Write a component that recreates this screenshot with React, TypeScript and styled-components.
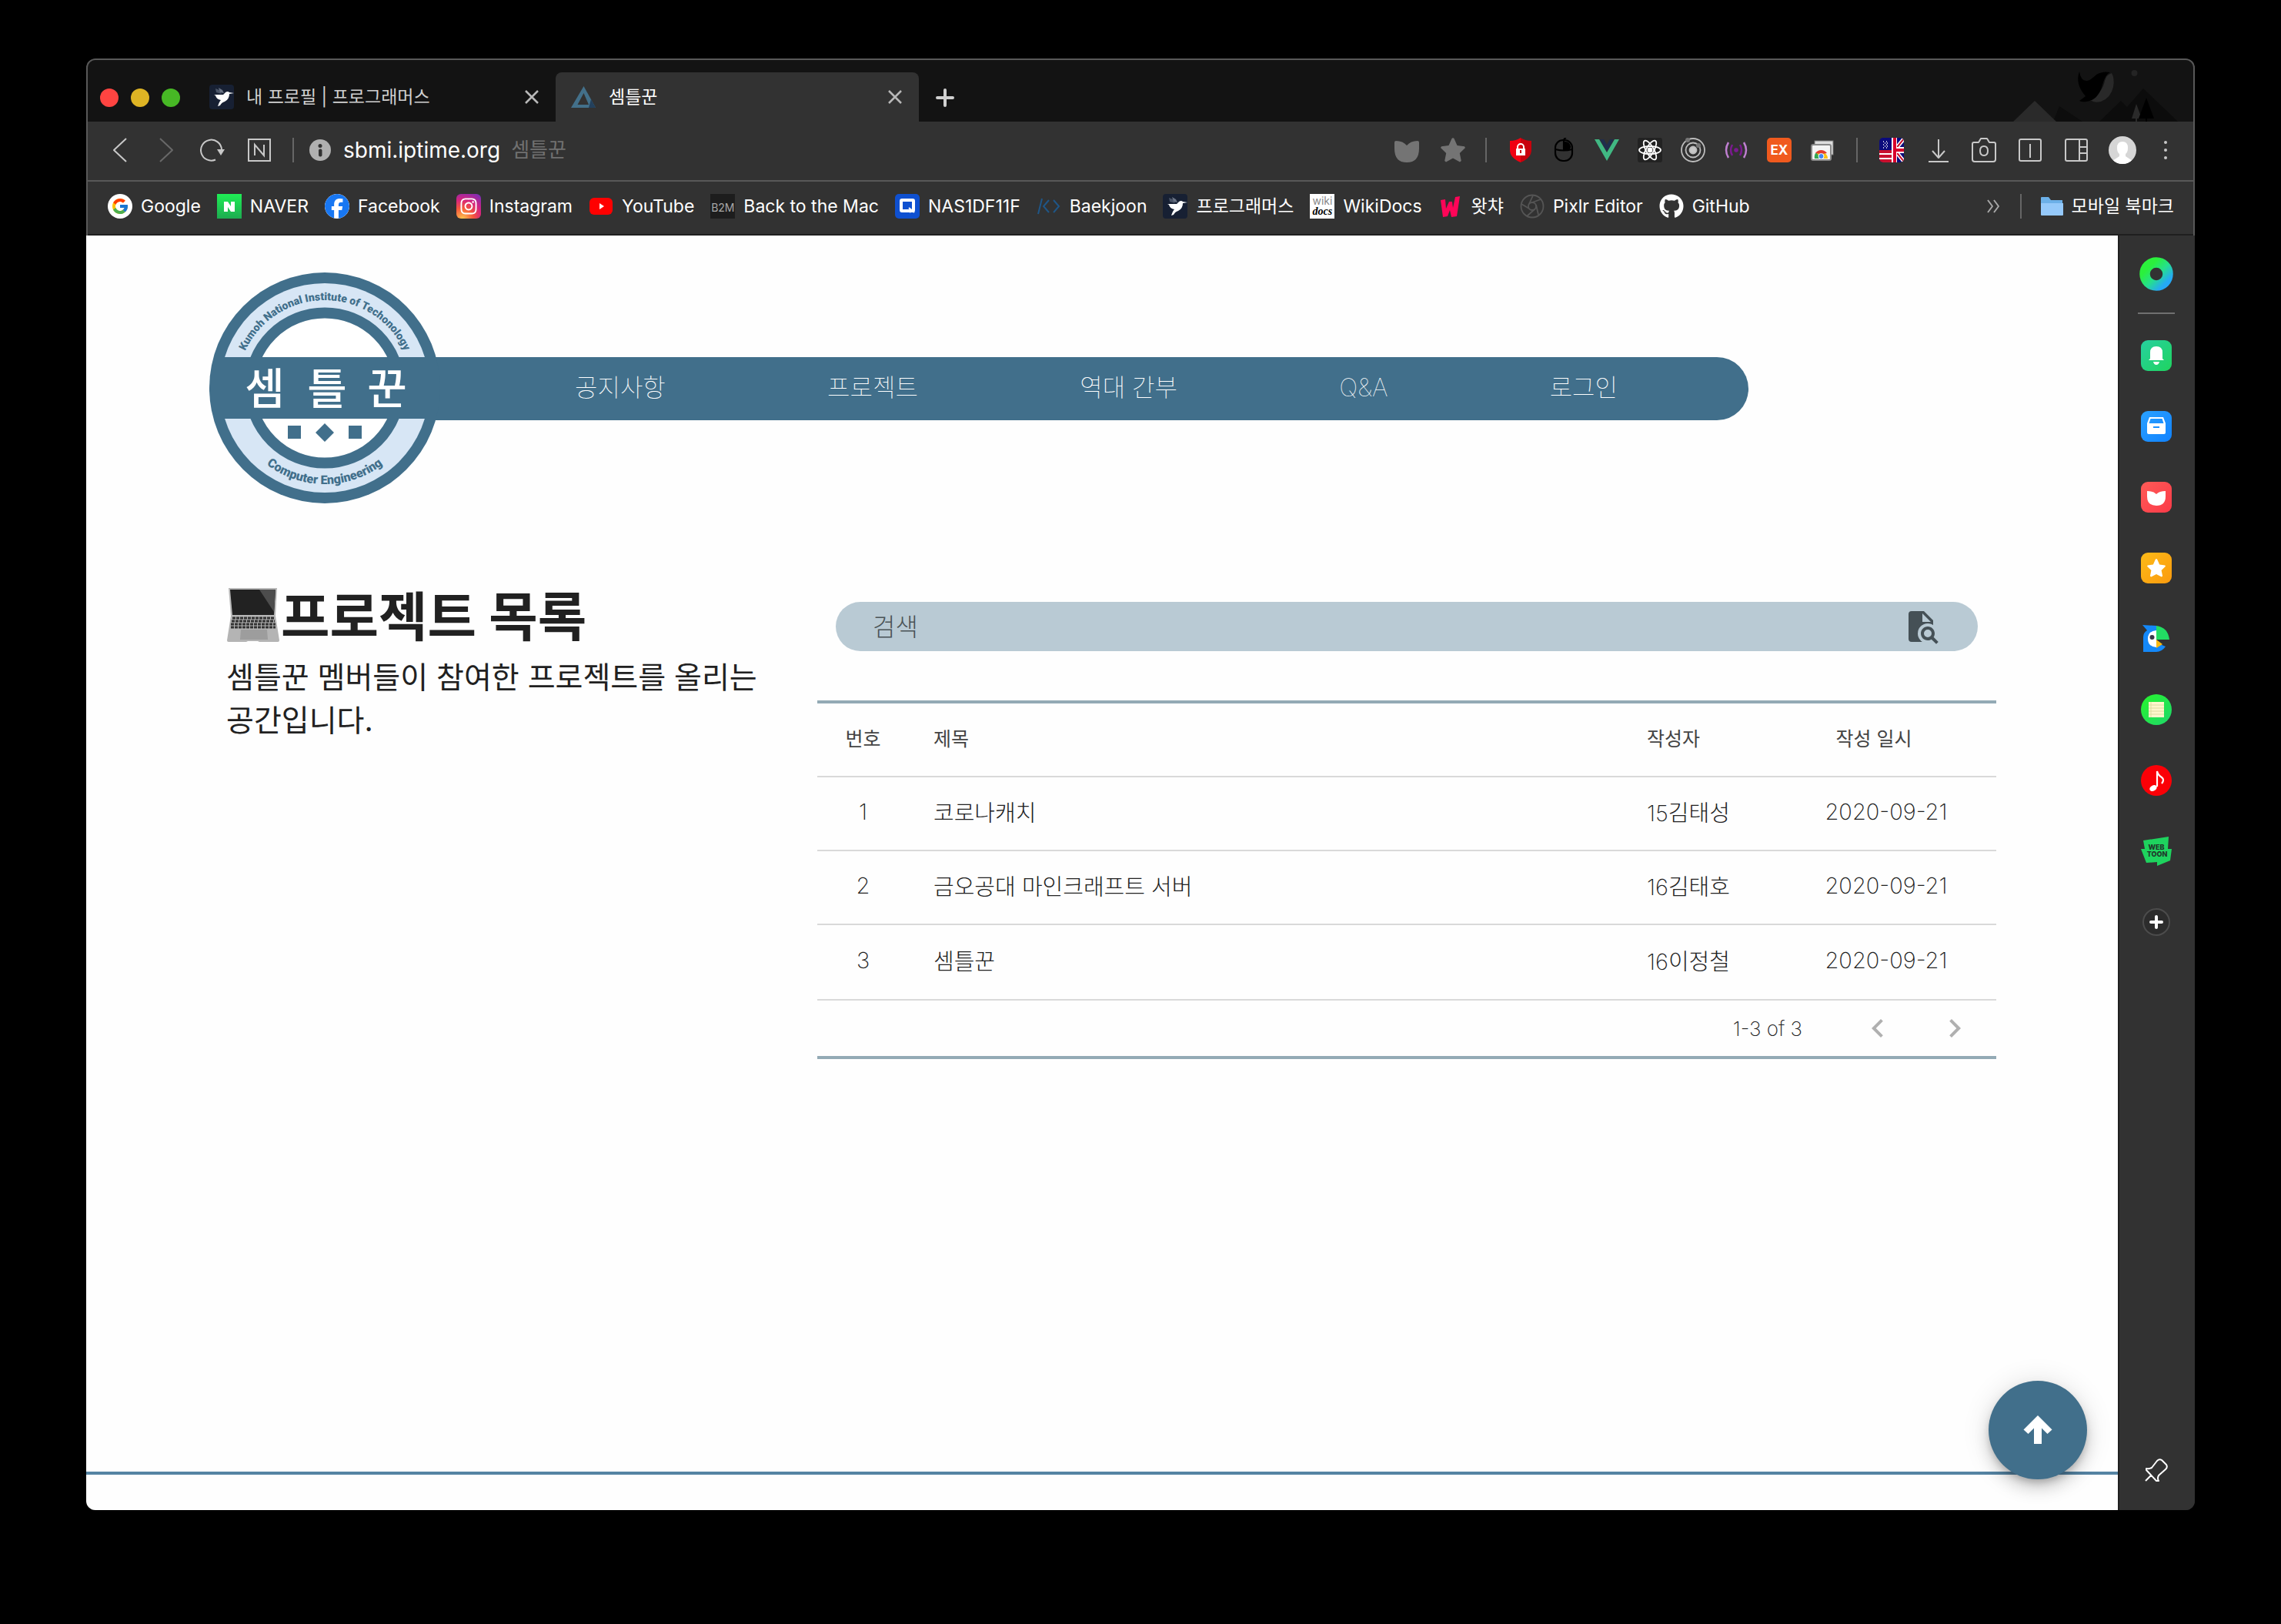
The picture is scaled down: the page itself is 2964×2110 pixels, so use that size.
import React from "react";
import styled, { createGlobalStyle, css } from "styled-components";
import { FcGoogle } from "react-icons/fc";
import { FaFacebook, FaGithub, FaInstagram } from "react-icons/fa6";
import { MdChevronLeft, MdChevronRight } from "react-icons/md";

const color = {
  brand: "#416f8b",
  chrome: "#323232",
  chromeDark: "#131313",
  chromeLine: "#585858",
  icon: "#c8c8c8",
  ink: "#212121",
};

const GlobalStyle = createGlobalStyle`
  *, *::before, *::after { box-sizing: border-box; }
  html, body { margin: 0; background: #000; }
  body { font-family: Inter, "Noto Sans CJK KR", sans-serif; color: ${color.ink}; }
  button, input { font: inherit; color: inherit; border: 0; padding: 0; margin: 0; background: none; }
  a { color: inherit; text-decoration: none; }
  svg { display: block; flex: none; }
`;

/* ---------- window ---------- */

const Desktop = styled.div`
  min-height: 100vh;
  padding: 76px 112px 148px;
  display: flex;
`;

const Window = styled.div`
  flex: 1;
  min-width: 0;
  display: flex;
  flex-direction: column;
  border-radius: 12px;
  overflow: hidden;
  background: ${color.chrome};
`;

const Chrome = styled.header`
  border: 2px solid ${color.chromeLine};
  border-bottom: 0;
  border-radius: 12px 12px 0 0;
  overflow: hidden;
  color: #fff;
`;

const row = css`
  display: flex;
  align-items: center;
`;

const IconButton = styled.button<{ $w?: number; $h?: number }>`
  ${row}
  justify-content: center;
  flex: none;
  width: ${(p) => p.$w ?? 32}px;
  height: ${(p) => p.$h ?? 40}px;
`;

const Divider = styled.span`
  width: 2px;
  height: 32px;
  flex: none;
  background: #666;
`;

/* ---------- tab strip ---------- */

const TabStrip = styled.div`
  ${row}
  height: 80px;
  background: ${color.chromeDark};
`;

const Lights = styled.div`
  ${row}
  gap: 16px;
  padding: 18px 16px 0;
`;

const Light = styled.button<{ $c: string }>`
  width: 24px;
  height: 24px;
  border-radius: 50%;
  background: ${(p) => p.$c};
`;

const Tab = styled.div<{ $active?: boolean }>`
  ${row}
  align-self: flex-end;
  width: 472px;
  height: 64px;
  padding: 0 20px 0 ${(p) => (p.$active ? 20 : 22)}px;
  justify-content: space-between;
  border-radius: 8px 8px 0 0;
  color: ${(p) => (p.$active ? "#fff" : "#d0d0d0")};
  background: ${(p) => (p.$active ? color.chrome : "transparent")};
`;

const TabTitle = styled.button`
  ${row}
  gap: 16px;
  font-size: 23px;
  line-height: 32px;
`;

const NewTab = styled(IconButton)`
  margin: 18px auto 0 18px;
`;

const ThemeArt = styled.svg`
  align-self: flex-end;
  margin-right: 12px;
`;

/* ---------- toolbar ---------- */

const Toolbar = styled.div`
  ${row}
  height: 78px;
  padding: 0 24px 2px 26px;
  border-bottom: 2px solid ${color.chromeLine};
  color: ${color.icon};
`;

const NavButtons = styled.div`
  ${row}
  gap: 28px;
  margin-right: 28px;
`;

const Address = styled.label`
  ${row}
  flex: 1;
  margin-left: 20px;
  font-size: 26px;
  line-height: 32px;
`;

const AddressInput = styled.input`
  field-sizing: content;
  margin: 0 14px 0 16px;
  font-size: 28px;
  color: #fff;
  outline: 0;
`;

const Hint = styled.span`
  color: #707070;
`;

const Cluster = styled.div<{ $gap: number; $m?: string }>`
  ${row}
  gap: ${(p) => p.$gap}px;
  margin: ${(p) => p.$m ?? "0"};
`;

/* ---------- bookmarks ---------- */

const Bookmarks = styled.nav`
  ${row}
  height: 70px;
  padding: 0 25px 4px 26px;
  gap: 21px;
  border-bottom: 2px solid #1f1f1f;
`;

const Bookmark = styled.a`
  ${row}
  gap: 11px;
  font-size: 23px;
  line-height: 32px;
  white-space: nowrap;
`;

const Badge = styled.span<{ $bg: string; $r?: number }>`
  ${row}
  flex: none;
  justify-content: center;
  width: 32px;
  height: 32px;
  border-radius: ${(p) => p.$r ?? 0}px;
  background: ${(p) => p.$bg};
  color: #fff;
`;

/* ---------- body ---------- */

const Body = styled.div`
  flex: 1;
  display: flex;
  min-height: 0;
`;

const Page = styled.main`
  flex: 1;
  min-width: 0;
  display: flex;
  flex-direction: column;
  position: relative;
  background: #fefefe;
`;

const SiteHeader = styled.div`
  ${row}
  padding: 48px 480px 0 160px;
`;

const LogoLink = styled.a`
  flex: none;
  z-index: 1;
`;

const SiteNav = styled.nav`
  ${row}
  flex: 1;
  justify-content: space-between;
  height: 82px;
  margin: 2px 0 0 -150px;
  padding: 0 170px 2px 325px;
  border-radius: 0 41px 41px 0;
  background: ${color.brand};
  color: #fff;
  font-size: 32px;
  font-weight: 100;
  line-height: 48px;
`;

const Content = styled.section`
  display: grid;
  grid-template-columns: minmax(0, 768fr) minmax(0, 1532fr);
  padding: 104px 158px 0 182px;
  flex: 1;
`;

const Heading = styled.h1`
  ${row}
  margin: 0;
  gap: 1px;
  font-size: 69px;
  font-weight: 700;
  line-height: 88px;
`;

const Lead = styled.p`
  margin: 6px 0 0;
  font-size: 39px;
  line-height: 56px;
  word-break: keep-all;
`;

const Search = styled.form`
  ${row}
  height: 64px;
  margin: 24px 24px 64px;
  padding: 0 50px 0 48px;
  border-radius: 32px;
  background: #b9cad4;
`;

const SearchInput = styled.input`
  flex: 1;
  min-width: 0;
  font-size: 32px;
  font-weight: 300;
  outline: 0;
  &::placeholder { color: #4a5357; opacity: 1; }
`;

const Table = styled.table`
  width: 100%;
  border-collapse: separate;
  border-spacing: 0;
  table-layout: fixed;
  border: solid #93aab5;
  border-width: 4px 0;
`;

const cell = css<{ $align?: string; $w?: number }>`
  height: 96px;
  padding: 0 32px 6px;
  text-align: ${(p) => p.$align ?? "left"};
  border-bottom: 2px solid #d9d9d9;
`;

const Th = styled.th<{ $align?: string; $w?: number }>`
  ${cell}
  width: ${(p) => (p.$w ? `${p.$w}px` : "auto")};
  font-size: 25px;
  font-weight: 400;
  color: #444;
  &:last-child { padding-right: 64px; }
`;

const Td = styled.td<{ $align?: string }>`
  ${cell}
  font-size: 29px;
  font-weight: 200;
`;

const PagerCell = styled.td`
  height: 72px;
  padding: 0 4px 0 0;
`;

const Pager = styled.div`
  ${row}
  justify-content: flex-end;
  font-size: 26px;
  font-weight: 200;
`;

const PageCount = styled.span`
  margin-right: 48px;
`;

const PagerButton = styled(IconButton)`
  color: #b0b0b0;
  font-size: 48px;
`;

const Footer = styled.footer`
  height: 50px;
  border-top: 4px solid #5584a3;
`;

const ToTop = styled.button`
  ${row}
  justify-content: center;
  position: absolute;
  right: 40px;
  bottom: 40px;
  width: 128px;
  height: 128px;
  border-radius: 50%;
  background: ${color.brand};
  box-shadow: 0 6px 10px -2px rgba(0, 0, 0, 0.2), 0 12px 20px rgba(0, 0, 0, 0.14),
    0 2px 36px rgba(0, 0, 0, 0.12);
`;

/* ---------- side panel ---------- */

const Side = styled.aside`
  display: flex;
  flex-direction: column;
  align-items: center;
  width: 100px;
  padding: 28px 2px 32px 0;
  border-left: 2px solid #1f1f1f;
  background: ${color.chrome};
`;

const SideLine = styled.span`
  width: 48px;
  height: 2px;
  margin: 28px 0 34px;
  background: #707070;
`;

const SideList = styled.div`
  flex: 1;
  display: flex;
  flex-direction: column;
  gap: 52px;
`;

/* ---------- drawings ---------- */

const Bird = () => (
  <svg width="32" height="32" viewBox="0 0 32 32">
    <rect width="32" height="32" rx="4" fill="#172033" />
    <path d="M8 5l5 2 3 5-7-2z" fill="#4b5568" />
    <path d="M12 4l5 3 2 4-5-1z" fill="#6b7485" />
    <path d="M6 13l12 0 3-3q3-2 5 0l6 1-6 1q0 7-6 10-4 1-6 5l-3 1q2-6 4-8-6-1-7-6z" fill="#fff" />
  </svg>
);

const Triangle = () => (
  <svg width="33" height="30" viewBox="0 0 33 30">
    <path fillRule="evenodd" d="M16.500 1L32 29H0zM16.500 10L8.500 25h14.500z" fill="#43708a" />
    <path d="M26 18l6 11h-9z" fill="#23405c" />
  </svg>
);

const Cross = () => (
  <svg width="18" height="18" viewBox="0 0 18 18" stroke="#b8b8b8" strokeWidth="2.500">
    <path d="M1 1l16 16M17 1L1 17" />
  </svg>
);

const Scenery = () => (
  <ThemeArt width="230" height="80" viewBox="0 0 230 80" aria-hidden="true">
    <path d="M60 80l8-20 30 20z" fill="#0d0d0d" />
    <path d="M8 80L36 53l28 27z" fill="#2a2a2a" />
    <path d="M120 80l28-27 8 8 21-24 45 43z" fill="#0c0c0c" />
    <path d="M136 17q4 7 2 18-3 14-16 19-8 2-12-1l-4 0q18-10 21-26 2-8 9-10z" fill="#292929" />
    <path d="M94 15q2 13 10 12 5-1 12-8 8-5 18-3-6 2-10 16-5 20-21 22-5 1-9-1l8-6q-14-16-8-32z" fill="#000" />
    <circle cx="165.500" cy="17" r="4" fill="#242424" />
    <path d="M168 57l7 19h-6v4h-2v-4h-5z" fill="#2a2a2a" />
    <path d="M181 49l10 27h-9v4h-2v-4h-9z" fill="#000" />
  </ThemeArt>
);

const Line = ({ w, h, d, sw = 2, stroke = color.icon }: { w: number; h: number; d: string; sw?: number; stroke?: string }) => (
  <svg width={w} height={h} viewBox={`0 0 ${w} ${h}`} fill="none" stroke={stroke} strokeWidth={sw} strokeLinejoin="round">
    <path d={d} />
  </svg>
);

const Reload = () => (
  <svg width="32" height="32" viewBox="0 0 32 32" fill="none" stroke={color.icon} strokeWidth="2">
    <path d="M20 28.500A13.500 13.500 0 1 1 28 15" />
    <path d="M22 15h10l-5 8z" fill={color.icon} stroke="none" />
  </svg>
);

const NaverBox = () => (
  <svg width="32" height="32" viewBox="0 0 32 32" fill="none" stroke={color.icon} strokeWidth="2">
    <path d="M3 2h28v28H3z" />
    <path d="M11 23V9l12 14V9" />
  </svg>
);

const Info = () => (
  <svg width="28" height="28" viewBox="0 0 28 28">
    <circle cx="14" cy="14" r="14" fill="#b0b0b0" />
    <circle cx="14" cy="8.500" r="2.500" fill="#323232" />
    <rect x="12" y="12.500" width="4.500" height="10" rx="2" fill="#323232" />
  </svg>
);

const Tulip = ({ size, fill }: { size: number; fill: string }) => (
  <svg width={size} height={size} viewBox="0 0 32 32">
    <path d="M0 6Q0 4 2 4q9 0 14 6 5-6 14-6 2 0 2 2v8q0 18-16 18T0 14z" fill={fill} />
  </svg>
);

const starPath =
  "M16 0l1.500 1 4 9 9.500 1.200 1 1.800-7.200 7 2 10-1.800 1.400L16 26.500l-9 4.900L5.200 30l2-10L0 13l1-1.800L10.500 10l4-9z";

const Star = ({ size, fill }: { size: number; fill: string }) => (
  <svg width={size} height={size} viewBox="0 0 32 32">
    <path d={starPath} fill={fill} />
  </svg>
);

const ShieldLock = () => (
  <svg width="32" height="32" viewBox="0 0 32 32">
    <path d="M16 0q6 4 14 4v12q0 10-14 16z" fill="#c8000c" />
    <path d="M16 0Q10 4 2 4v12q0 10 14 16z" fill="#f00011" />
    <path d="M12 15v-3a4 4 0 0 1 8 0v3" fill="none" stroke="#fff" strokeWidth="2" />
    <rect x="10" y="14" width="12" height="9" fill="#fff" />
    <path d="M16 16v4" stroke="#c8000c" strokeWidth="2" />
  </svg>
);

const Mouse = () => (
  <svg width="32" height="32" viewBox="0 0 32 32" fill="none" stroke="#000" strokeWidth="2.200">
    <rect x="5" y="3" width="22" height="27" rx="10" />
    <path d="M5 15q11 3 22 0M16 17V4q0-3 3-4" />
    <path d="M18 6q5 0 6 6l-1 2-5 1z" fill="#000" />
  </svg>
);

const Vue = () => (
  <svg width="32" height="32" viewBox="0 0 32 32">
    <path d="M0 2h6l10 17L26 2h6L16 30z" fill="#41b883" />
    <path d="M7 2h5l4 7 4-7h5l-9 16z" fill="#1f2d4d" />
  </svg>
);

const Atom = () => (
  <svg width="32" height="32" viewBox="0 0 32 32" fill="none" stroke="#fff" strokeWidth="1.800">
    <rect width="32" height="32" rx="3" fill="#222" stroke="none" />
    <ellipse cx="16" cy="16" rx="14" ry="5" />
    <ellipse cx="16" cy="16" rx="14" ry="5" transform="rotate(60 16 16)" />
    <ellipse cx="16" cy="16" rx="14" ry="5" transform="rotate(120 16 16)" />
    <circle cx="16" cy="16" r="2.500" fill="#fff" />
  </svg>
);

const Orbit = () => (
  <svg width="32" height="32" viewBox="0 0 32 32" fill="none" stroke="#bdbdbd" strokeWidth="1.800">
    <circle cx="16" cy="16" r="15" />
    <circle cx="16" cy="16" r="9.500" />
    <circle cx="16" cy="16" r="4.500" fill="#c8c8c8" />
    <circle cx="9" cy="3" r="3" fill="#777" stroke="none" />
    <circle cx="23" cy="10" r="3" fill="#777" stroke="none" />
  </svg>
);

const Signal = () => (
  <svg width="32" height="32" viewBox="0 0 32 32" fill="none" strokeWidth="2.500">
    <path d="M6 6q-6 10 0 20M26 6q6 10 0 20" stroke="#bf7fd0" />
    <path d="M11 9q-4 7 0 14M21 9q4 7 0 14" stroke="#7b1a90" />
    <circle cx="16" cy="16" r="2.800" fill="#7b1a90" />
  </svg>
);

const ExBadge = styled(Badge)`
  font-size: 17px;
  font-weight: 700;
`;

const ChromeWindows = () => (
  <svg width="32" height="32" viewBox="0 0 32 32">
    <rect x="6" y="4" width="24" height="18" fill="#ddd" stroke="#777" />
    <rect x="2" y="9" width="25" height="20" rx="2" fill="#f4f4f4" stroke="#888" strokeWidth="2" />
    <path d="M6 27a8.500 9 0 0 1 17 0z" fill="#fbc116" />
    <path d="M14 27H6q-1-5 2-8z" fill="#34a853" />
    <path d="M7 20q3-4 7.500-4t7.500 4l-7 1z" fill="#e33b2e" />
    <circle cx="14.500" cy="24" r="3.500" fill="#4285f4" stroke="#fff" />
  </svg>
);

const Flags = () => (
  <svg width="32" height="32" viewBox="0 0 32 32">
    <clipPath id="flagClip"><rect width="32" height="32" rx="5" /></clipPath>
    <g clipPath="url(#flagClip)">
      <rect width="32" height="32" fill="#0b0b7c" />
      <path d="M0 16h17v16H0z" fill="#c8102e" />
      <path d="M0 20h17v2H0zM0 26h17v2H0z" fill="#fff" />
      <path d="M5 5h1M9 5h1M7 7h1M11 7h-1M5 9h1M9 9h1M7 11h1M11 11h-1M5 13h1M9 13h1" stroke="#fff" strokeWidth="1.600" />
      <path d="M20 16L33 0M20 16l13 16" stroke="#fff" strokeWidth="5" />
      <path d="M20 16L33 0M20 16l13 16" stroke="#c8102e" strokeWidth="2" />
      <path d="M16 0h7v12h9v8h-9v12h-7z" fill="#fff" />
      <path d="M18 0h4v14h10v4H22v14h-4z" fill="#d8002c" />
    </g>
  </svg>
);

const Avatar = () => (
  <svg width="36" height="36" viewBox="0 0 36 36">
    <clipPath id="avatarClip"><circle cx="18" cy="18" r="18" /></clipPath>
    <g clipPath="url(#avatarClip)">
      <rect width="36" height="36" fill="#d6d6d6" />
      <path d="M18 7q7 0 7 8 0 6-3 8v3l9 6v4H5v-4l9-6v-3q-3-2-3-8 0-8 7-8z" fill="#fff" />
    </g>
  </svg>
);

const More = () => (
  <svg width="8" height="32" viewBox="0 0 8 32" fill={color.icon}>
    <circle cx="4" cy="6" r="2" /><circle cx="4" cy="16" r="2" /><circle cx="4" cy="26" r="2" />
  </svg>
);

const GoogleIcon = styled(Badge)`font-size: 24px;`;
const InstaIcon = styled(Badge)`font-size: 24px;`;
const BigGlyph = styled.span`font-size: 32px; display: flex;`;
const FacebookIcon = styled(BigGlyph)`
  color: #1877f2;
  border-radius: 50%;
  background: #fff;
  overflow: hidden;
`;

const NaverIcon = () => (
  <svg width="32" height="32" viewBox="0 0 32 32">
    <defs><linearGradient id="nv" x2="0" y2="1"><stop stopColor="#1fee55" /><stop offset="1" stopColor="#1dab50" /></linearGradient></defs>
    <rect width="32" height="32" fill="url(#nv)" />
    <path d="M9 10h5l4 6v-6h5v13h-5l-4-6v6H9z" fill="#fff" />
  </svg>
);

const YouTubeIcon = () => (
  <svg width="32" height="32" viewBox="0 0 32 32">
    <rect x="1" y="5" width="30" height="22" rx="6" fill="#f00" />
    <path d="M14 12l6 4-6 4z" fill="#fff" />
  </svg>
);

const MacBadge = styled(Badge)`
  align-items: flex-end;
  padding-bottom: 6px;
  font-size: 14px;
  line-height: 16px;
  color: #a8a8a8;
`;

const NasIcon = () => (
  <svg width="32" height="32" viewBox="0 0 32 32">
    <rect width="32" height="32" rx="5" fill="#0f50d0" />
    <rect x="8" y="8" width="16" height="14" rx="1" fill="none" stroke="#fff" strokeWidth="4" />
    <path d="M18 18l7 6M19 24l6-6" stroke="#fff" strokeWidth="2" />
  </svg>
);

const BaekjoonIcon = () => (
  <svg width="32" height="32" viewBox="0 0 32 32" fill="none" stroke="#1f5687" strokeWidth="2">
    <path d="M7 6L2 26M16 8l-7 8 7 8M22 8l7 8-7 8" />
  </svg>
);

const WikiBadge = styled(Badge)`
  flex-direction: column;
  font-size: 14px;
  line-height: 14px;
  color: #888;
`;

const WikiDocs = styled.b`
  font-family: "Liberation Serif", serif;
  font-style: italic;
  color: #000;
`;

const WatchaIcon = () => (
  <svg width="32" height="32" viewBox="0 0 32 32">
    <path d="M3 8l6-1 1 12 4-9h4l1 8 3-14 6-1-4 26-7 1-2-9-3 8-6 1z" fill="#ff0558" />
  </svg>
);

const PixlrIcon = () => (
  <svg width="32" height="32" viewBox="0 0 32 32" fill="none" stroke="#555" strokeWidth="1.800">
    <circle cx="16" cy="16" r="14.500" />
    <circle cx="16" cy="16" r="5" />
    <path d="M16 11L27 7M21 14l3 13M19 20L9 29M12 19L2 13M12 13L17 2" />
  </svg>
);

const FolderIcon = () => (
  <svg width="29" height="26" viewBox="0 0 29 26">
    <path d="M0 2q0-1 1-1h9l3 4h15v8H0z" fill="#6cb0e8" />
    <path d="M0 9h29v15q0 1-1 1H1q-1 0-1-1z" fill="#95c9fa" />
  </svg>
);

const Tile = ({ from, to, round, children }: { from: string; to: string; round?: boolean; children: React.ReactNode }) => {
  const id = `tile${from.slice(1)}`;
  return (
    <svg width="40" height="40" viewBox="0 0 40 40">
      <defs><linearGradient id={id} x2="1" y2="1"><stop stopColor={from} /><stop offset="1" stopColor={to} /></linearGradient></defs>
      <rect width="40" height="40" rx={round ? 20 : 9} fill={`url(#${id})`} />
      {children}
    </svg>
  );
};

const Donut = () => (
  <svg width="44" height="44" viewBox="0 0 44 44">
    <defs><linearGradient id="donut" x1="0.200" y1="0.200" x2="0.900" y2="0.900"><stop stopColor="#2bf03c" /><stop offset="0.500" stopColor="#25e08d" /><stop offset="1" stopColor="#25a9f5" /></linearGradient></defs>
    <circle cx="22" cy="22" r="15" fill="none" stroke="url(#donut)" strokeWidth="13.500" />
  </svg>
);

const Parrot = () => (
  <svg width="40" height="40" viewBox="0 0 40 40">
    <path d="M2 2l18 1v34H3V18q0-6 5-9z" fill="#1488f8" />
    <path d="M20 25l12 5q-5 7-12 7z" fill="#1488f8" />
    <path d="M20 9v22Q9 30 9 20T20 9z" fill="#fff" />
    <path d="M20 3q15 2 17 18H20z" fill="#22dd63" />
    <path d="M20 21l8 6-8 5z" fill="#f9b912" />
    <circle cx="14.500" cy="18" r="3" fill="#3a3a4a" />
  </svg>
);

const Webtoon = () => (
  <svg width="40" height="40" viewBox="0 0 40 40" fontFamily="Inter, sans-serif" fontWeight="800" fontSize="9" textAnchor="middle">
    <path d="M3 6l33-5-1 16h5l-2 15-17 7v-5l-14 1-7-18h5z" fill="#1ed35e" />
    <text x="20" y="18" fill="#20352a">WEB</text>
    <text x="21" y="27" fill="#20352a">TOON</text>
  </svg>
);

const AddCircle = () => (
  <svg width="40" height="40" viewBox="0 0 40 40">
    <circle cx="20" cy="20" r="17" fill="#2c2c2c" stroke="#4c4c4c" strokeWidth="2" />
    <path d="M20 13v14M13 20h14" stroke="#fff" strokeWidth="4" strokeLinecap="round" />
  </svg>
);

const Pin = () => (
  <svg width="32" height="32" viewBox="0 0 32 32" fill="none" stroke="#fff" strokeWidth="2" strokeLinejoin="round">
    <path d="M2 30l8-8M3 14q3 1 7-1l7-9q3-3 6-1l6 6q2 3-1 6l-9 8q-2 4 0 7h-3L3 16z" />
  </svg>
);

const Logo = () => (
  <svg width="300" height="300" viewBox="0 0 300 300" role="img" aria-label="셈틀꾼">
    <defs>
      <path id="arcTop" d="M36 150a114 114 0 0 1 228 0" />
      <path id="arcBottom" d="M25 150a125 125 0 0 0 250 0" />
    </defs>
    <circle cx="150" cy="150" r="150" fill={color.brand} />
    <circle cx="150" cy="150" r="136" fill="#d7e6f5" />
    <circle cx="150" cy="150" r="97.500" fill="#fff" stroke={color.brand} strokeWidth="14" />
    <path d="M8 110h282v80H8z" fill={color.brand} />
    <g fill={color.brand} fontFamily="Roboto, sans-serif" fontWeight="900" textAnchor="middle">
      <text fontSize="14"><textPath href="#arcTop" startOffset="50%">Kumoh National Institute of Techonology</textPath></text>
      <text fontSize="16"><textPath href="#arcBottom" startOffset="50%">Computer Engineering</textPath></text>
      <path d="M102 199h17v17h-17zM181 199h17v17h-17zM150 196l12 12-12 12-12-12z" />
    </g>
    <g fill="#fff" fontFamily="'Noto Sans CJK KR', sans-serif" fontSize="56" fontWeight="500" textAnchor="middle">
      <text x="72" y="171">셈</text>
      <text x="153" y="171">틀</text>
      <text x="231" y="171">꾼</text>
    </g>
  </svg>
);

const Laptop = () => (
  <svg width="70" height="78" viewBox="0 0 70 78">
    <path d="M3 1h63l-2 37H6z" fill="#b9b9b9" />
    <path d="M5 3h59l-2 33H8z" fill="#222" />
    <path d="M43 3h21l-2 29z" fill="#4d4d4d" />
    <path d="M6 37h58l5 32q0 2-2 2H43l-2-1H28l-2 1H3q-2 0-2-2z" fill="#b4b4b4" />
    <path d="M8 40h54M7 44h56M6 48h58M6 52h58" stroke="#333" strokeWidth="3" strokeDasharray="4 1" />
    <path d="M19 55h34l1 13H18z" fill="#9d9d9d" />
  </svg>
);

const FileSearch = () => (
  <svg width="48" height="48" viewBox="0 0 24 24" fill="#455056">
    <path fillRule="evenodd" d="M6 2h8l6 6v14H6a2 2 0 0 1-2-2V4a2 2 0 0 1 2-2M13 3.500V9h5.500z" />
    <circle cx="16.500" cy="16.500" r="6.500" fill="#b9cad4" />
    <path d="M17 19h5v4h-5z" fill="#b9cad4" />
    <path transform="translate(1 0)" d="M15.500 12C18 12 20 14 20 16.500c0 .88-.25 1.710-.69 2.400l3.080 3.100L21 23.390l-3.120-3.070c-.69.430-1.510.680-2.380.680C13 21 11 19 11 16.500S13 12 15.500 12m0 2a2.500 2.500 0 1 0 0 5 2.500 2.500 0 0 0 0-5" />
  </svg>
);

const ArrowUp = () => (
  <svg width="40" height="40" viewBox="0 0 40 40">
    <path d="M20 1l18.500 18.500-6 5.500L25 17.500V38H15V17.500L7.500 25l-6-5.500z" fill="#fff" />
  </svg>
);

/* ---------- data ---------- */

const extensions: [string, React.ReactNode][] = [
  ["광고 차단", <ShieldLock />],
  ["마우스", <Mouse />],
  ["Vue", <Vue />],
  ["React", <Atom />],
  ["Orbit", <Orbit />],
  ["Signal", <Signal />],
  ["EX", <ExBadge $bg="#f05a1e" $r={5}>EX</ExBadge>],
  ["Chrome", <ChromeWindows />],
];

const tools: [string, React.ReactNode][] = [
  ["번역", <Flags />],
  ["다운로드", <Line w={32} h={32} d="M17 2v24M9 17l8 9 8-9M4 31h26" />],
  ["캡처", <Line w={32} h={32} d="M3 6h6l3-5h8l3 5h6q2 0 2 2v20q0 3-3 3H4q-3 0-3-3V8q0-2 2-2zM16 11q5 0 5 6t-5 6-5-6 5-6" />],
  ["사이드바", <Line w={32} h={32} d="M4 2h24q2 0 2 2v24q0 2-2 2H4q-2 0-2-2V4q0-2 2-2zM16 8v18" />],
  ["패널", <Line w={32} h={32} d="M4 2h24q2 0 2 2v24q0 2-2 2H4q-2 0-2-2V4q0-2 2-2zM20 2v28M20 12h10M20 20h10" />],
  ["프로필", <Avatar />],
];

const bookmarks: [string, React.ReactNode][] = [
  ["Google", <GoogleIcon $bg="#fff" $r={16}><FcGoogle /></GoogleIcon>],
  ["NAVER", <NaverIcon />],
  ["Facebook", <FacebookIcon><FaFacebook /></FacebookIcon>],
  ["Instagram", <InstaIcon $bg="radial-gradient(circle at 25% 100%, #fdc54f 0%, #f5573b 35%, #d5247e 62%, #6a30c4 100%)" $r={6}><FaInstagram /></InstaIcon>],
  ["YouTube", <YouTubeIcon />],
  ["Back to the Mac", <MacBadge $bg="#1d1d1d">B2M</MacBadge>],
  ["NAS1DF11F", <NasIcon />],
  ["Baekjoon", <BaekjoonIcon />],
  ["프로그래머스", <Bird />],
  ["WikiDocs", <WikiBadge $bg="#fff"><span>wiki</span><WikiDocs>docs</WikiDocs></WikiBadge>],
  ["왓챠", <WatchaIcon />],
  ["Pixlr Editor", <PixlrIcon />],
  ["GitHub", <BigGlyph><FaGithub /></BigGlyph>],
];

const sideApps: [string, React.ReactNode][] = [
  ["알림", <Tile from="#27d0a0" to="#1fd45f"><path d="M12 24v-8q0-8 8-8t8 8v8l2 2H10zM16 28h8q-1 4-4 4t-4-4" fill="#fff" /></Tile>],
  ["보관함", <Tile from="#2aa1ff" to="#1182ff"><path fillRule="evenodd" d="M11 8h18l3 8v12q0 2-2 2H10q-2 0-2-2V16zM12.500 10l-2 6h19l-2-6zM16 20v2h8v-2z" fill="#fff" /></Tile>],
  ["툴립", <Tile from="#ff5b57" to="#fb3a48"><path d="M8 12q8 0 12 4 4-4 12-4v7q0 12-12 12T8 19z" fill="#fff" /></Tile>],
  ["즐겨찾기", <Tile from="#fdbb18" to="#fb9a0e"><path transform="translate(8 8) scale(.75)" d={starPath} fill="#fff" /></Tile>],
  ["파파고", <Parrot />],
  ["메모", <Tile from="#27f52b" to="#1fd76c" round><path d="M10 10h20v20H10z" fill="#fff6cc" /><path d="M10 14h20M10 18h20M10 22h20M10 26h20M13 10v20" stroke="#dcdca0" /></Tile>],
  ["뮤직", <Tile from="#fb0007" to="#fb0006" round><ellipse cx="16" cy="30" rx="5" ry="3.500" transform="rotate(-30 16 30)" fill="#fff" /><path d="M21 28V8q1 5 6 8 4 3 0 8" fill="none" stroke="#fff" strokeWidth="2.200" /></Tile>],
  ["웹툰", <Webtoon />],
  ["추가", <AddCircle />],
];

const menu = ["공지사항", "프로젝트", "역대 간부", "Q&A", "로그인"];

const projects = [
  { no: 1, title: "코로나캐치", author: "15김태성", date: "2020-09-21" },
  { no: 2, title: "금오공대 마인크래프트 서버", author: "16김태호", date: "2020-09-21" },
  { no: 3, title: "셈틀꾼", author: "16이정철", date: "2020-09-21" },
];

const Rows = styled.tbody`
  tr:last-child td { border-bottom: 0; }
`;

const PagerFoot = styled.tfoot`
  td { border-top: 2px solid #d9d9d9; height: 74px; }
`;

export default function App() {
  return (
    <>
      <GlobalStyle />
      <Desktop>
        <Window>
          <Chrome>
            <TabStrip>
              <Lights>
                <Light $c="#ff4441" aria-label="닫기" />
                <Light $c="#deb424" aria-label="최소화" />
                <Light $c="#47b825" aria-label="최대화" />
              </Lights>
              <Tab>
                <TabTitle><Bird />내 프로필 | 프로그래머스</TabTitle>
                <IconButton $w={22} aria-label="탭 닫기"><Cross /></IconButton>
              </Tab>
              <Tab $active>
                <TabTitle><Triangle />셈틀꾼</TabTitle>
                <IconButton $w={22} aria-label="탭 닫기"><Cross /></IconButton>
              </Tab>
              <NewTab aria-label="새 탭">
                <svg width="24" height="24" viewBox="0 0 24 24" stroke="#d0d0d0" strokeWidth="4" strokeLinecap="round">
                  <path d="M12 2v20M2 12h20" />
                </svg>
              </NewTab>
              <Scenery />
            </TabStrip>

            <Toolbar>
              <NavButtons>
                <IconButton aria-label="뒤로"><Line w={20} h={32} d="M18 1L2 16l16 15" /></IconButton>
                <IconButton aria-label="앞으로"><Line w={20} h={32} d="M2 1l16 15L2 31" stroke="#686868" /></IconButton>
                <IconButton aria-label="새로고침"><Reload /></IconButton>
                <IconButton aria-label="네이버"><NaverBox /></IconButton>
              </NavButtons>
              <Divider />
              <Address>
                <Info />
                <AddressInput defaultValue="sbmi.iptime.org" aria-label="주소" />
                <Hint>셈틀꾼</Hint>
              </Address>
              <Cluster $gap={28} $m="0 26px 0 0">
                <IconButton aria-label="툴립"><Tulip size={32} fill="#747474" /></IconButton>
                <IconButton aria-label="즐겨찾기"><Star size={32} fill="#747474" /></IconButton>
              </Cluster>
              <Divider />
              <Cluster $gap={24} $m="0 28px">
                {extensions.map(([name, icon]) => (
                  <IconButton key={name} aria-label={name}>{icon}</IconButton>
                ))}
              </Cluster>
              <Divider />
              <Cluster $gap={28} $m="0 0 0 28px">
                {tools.map(([name, icon]) => (
                  <IconButton key={name} aria-label={name}>{icon}</IconButton>
                ))}
                <IconButton $w={24} aria-label="더보기"><More /></IconButton>
              </Cluster>
            </Toolbar>

            <Bookmarks aria-label="북마크">
              {bookmarks.map(([name, icon]) => (
                <Bookmark key={name} href="#">{icon}{name}</Bookmark>
              ))}
              <Cluster $gap={25} $m="0 0 0 auto">
                <IconButton $w={20} aria-label="더 많은 북마크"><Line w={20} h={20} d="M3 2l6 8-6 8M11 2l6 8-6 8" stroke="#a8a8a8" /></IconButton>
                <Divider />
                <Bookmark href="#"><FolderIcon />모바일 북마크</Bookmark>
              </Cluster>
            </Bookmarks>
          </Chrome>

          <Body>
            <Page>
              <SiteHeader>
                <LogoLink href="#" aria-label="홈"><Logo /></LogoLink>
                <SiteNav>
                  {menu.map((m) => <a key={m} href="#">{m}</a>)}
                </SiteNav>
              </SiteHeader>

              <Content>
                <div>
                  <Heading><Laptop />프로젝트 목록</Heading>
                  <Lead>셈틀꾼 멤버들이 참여한 프로젝트를 올리는 공간입니다.</Lead>
                </div>
                <div>
                  <Search onSubmit={(e) => e.preventDefault()}>
                    <SearchInput placeholder="검색" aria-label="검색" />
                    <IconButton $w={48} $h={48} aria-label="검색하기"><FileSearch /></IconButton>
                  </Search>
                  <Table>
                    <thead>
                      <tr>
                        <Th $w={119} $align="center">번호</Th>
                        <Th>제목</Th>
                        <Th $w={200}>작성자</Th>
                        <Th $w={286} $align="center">작성 일시</Th>
                      </tr>
                    </thead>
                    <Rows>
                      {projects.map((p) => (
                        <tr key={p.no}>
                          <Td $align="center">{p.no}</Td>
                          <Td>{p.title}</Td>
                          <Td>{p.author}</Td>
                          <Td $align="center">{p.date}</Td>
                        </tr>
                      ))}
                    </Rows>
                    <PagerFoot>
                      <tr>
                        <PagerCell colSpan={4}>
                          <Pager>
                            <PageCount>1-3 of 3</PageCount>
                            <PagerButton $w={100} aria-label="이전"><MdChevronLeft /></PagerButton>
                            <PagerButton $w={100} aria-label="다음"><MdChevronRight /></PagerButton>
                          </Pager>
                        </PagerCell>
                      </tr>
                    </PagerFoot>
                  </Table>
                </div>
              </Content>

              <Footer />
              <ToTop aria-label="맨 위로"><ArrowUp /></ToTop>
            </Page>

            <Side>
              <IconButton $w={44} $h={44} aria-label="사이드바 홈"><Donut /></IconButton>
              <SideLine />
              <SideList>
                {sideApps.map(([name, icon]) => (
                  <IconButton key={name} $w={40} aria-label={name}>{icon}</IconButton>
                ))}
              </SideList>
              <IconButton aria-label="고정"><Pin /></IconButton>
            </Side>
          </Body>
        </Window>
      </Desktop>
    </>
  );
}
